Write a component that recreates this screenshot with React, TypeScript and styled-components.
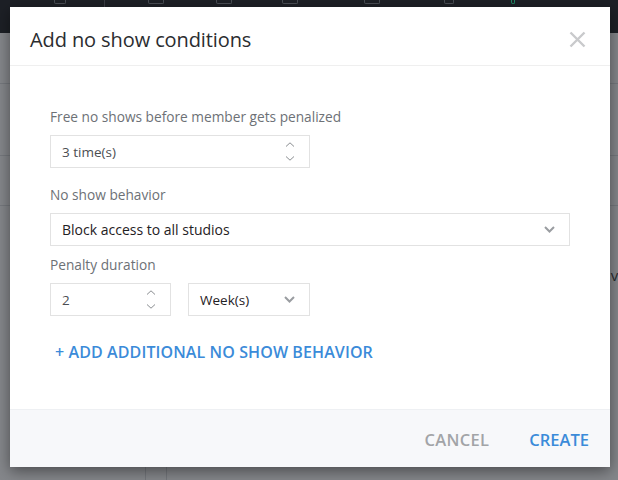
import React from "react";
import styled, { createGlobalStyle } from "styled-components";

const GlobalStyle = createGlobalStyle`
  html, body {
    margin: 0;
    padding: 0;
    background: #84868a;
  }
  body {
    font-family: "Open Sans", Lato, "Liberation Sans", sans-serif;
  }
`;

const vars = {
  blue: "#3b8bd9",
  border: "#e2e2e2",
  label: "#6d7176",
};

const Page = styled.div`
  position: relative;
  width: 618px;
  height: 480px;
  overflow: hidden;
  background: #85878b;
`;

const TopBar = styled.div`
  height: 33px;
  background: #1d2026;
  display: flex;
  align-items: flex-start;
`;

const TopIcon = styled.div<{ w: number; green?: boolean }>`
  width: ${(p) => p.w}px;
  height: 3px;
  border: 1px solid ${(p) => (p.green ? "#1f8a66" : "#4a4e55")};
  border-top: none;
  border-radius: 0 0 2px 2px;
`;

const TopGap = styled.div<{ w: number }>`
  width: ${(p) => p.w}px;
`;

const TopDivider = styled.div`
  width: 1px;
  height: 8px;
  background: #3a3d44;
`;

const BackRow = styled.div<{ h: number; last?: boolean }>`
  height: ${(p) => p.h}px;
  border-bottom: ${(p) => (p.last ? "none" : "1px solid #76797e")};
  display: flex;
  justify-content: flex-end;
  align-items: flex-end;
`;

const BackText = styled.span`
  color: #2a2c30;
  font-size: 15px;
  line-height: 18px;
  margin-right: -4px;
`;

const BackColumns = styled.div`
  display: flex;
  height: 100%;
  padding-left: 145px;
`;

const BackCol = styled.div`
  width: 20px;
  border-left: 1px solid #74777c;
  border-right: 1px solid #74777c;
`;

const Modal = styled.div`
  position: absolute;
  top: 7px;
  left: 10px;
  width: 600px;
  height: 460px;
  background: #fff;
  box-shadow: 0 4px 14px rgba(0, 0, 0, 0.45);
  display: flex;
  flex-direction: column;
`;

const Header = styled.div`
  height: 59px;
  border-bottom: 1px solid #efefef;
  display: flex;
  align-items: center;
  justify-content: space-between;
  padding: 7px 24px 0 20px;
  box-sizing: border-box;
`;

const Title = styled.h2`
  margin: 0;
  font-size: 20px;
  font-weight: 400;
  color: #2b2d30;
  letter-spacing: -0.1px;
`;

const CloseButton = styled.button`
  border: none;
  background: none;
  padding: 0;
  width: 17px;
  height: 17px;
  display: flex;
`;

const Body = styled.div`
  flex: 1;
  padding: 43px 40px 0 40px;
  display: flex;
  flex-direction: column;
`;

const Field = styled.div<{ mb: number }>`
  display: flex;
  flex-direction: column;
  gap: 10px;
  margin-bottom: ${(p) => p.mb}px;
`;

const Label = styled.div`
  font-size: 13.7px;
  color: ${vars.label};
  line-height: 16px;
`;

const Row = styled.div`
  display: flex;
  gap: 17px;
`;

const Box = styled.div<{ w: number }>`
  width: ${(p) => p.w}px;
  height: 33px;
  box-sizing: border-box;
  border: 1px solid ${vars.border};
  display: flex;
  align-items: center;
  justify-content: space-between;
  padding: 0 14px 0 11px;
`;

const BoxText = styled.span<{ dark?: boolean; size: number }>`
  font-size: ${(p) => p.size}px;
  color: ${(p) => (p.dark ? "#1f2124" : "#4b4e52")};
`;

const Stepper = styled.div`
  display: flex;
  flex-direction: column;
  gap: 9px;
`;

const AddLink = styled.a`
  margin-top: 25px;
  margin-left: 5px;
  font-size: 16px;
  font-weight: 600;
  letter-spacing: 0.1px;
  color: ${vars.blue};
  cursor: pointer;
`;

const Footer = styled.div`
  height: 58px;
  background: #f7f8fa;
  border-top: 1px solid #eef0f3;
  display: flex;
  align-items: center;
  justify-content: flex-end;
  gap: 40px;
  padding: 1px 21px 0 0;
  box-sizing: border-box;
`;

const FooterButton = styled.button<{ primary?: boolean }>`
  border: none;
  background: none;
  padding: 0;
  font-family: inherit;
  font-size: 16.5px;
  font-weight: 600;
  letter-spacing: ${(p) => (p.primary ? 0 : 0.3)}px;
  color: ${(p) => (p.primary ? vars.blue : "#a2a4a7")};
`;

const StepArrows = () => (
  <Stepper>
    <svg width="10" height="5" viewBox="0 0 10 5">
      <path d="M1 4.5 L5 0.8 L9 4.5" fill="none" stroke="#8a8d91" strokeWidth="1" />
    </svg>
    <svg width="10" height="5" viewBox="0 0 10 5">
      <path d="M1 0.5 L5 4.2 L9 0.5" fill="none" stroke="#8a8d91" strokeWidth="1" />
    </svg>
  </Stepper>
);

const Chevron = () => (
  <svg width="11" height="7" viewBox="0 0 11 7">
    <path d="M1 1 L5.5 5.5 L10 1" fill="none" stroke="#9a9da1" strokeWidth="2" />
  </svg>
);

export default function App() {
  return (
    <Page>
      <GlobalStyle />
      <TopBar>
        <TopGap w={54} />
        <TopIcon w={10} />
        <TopGap w={38} />
        <TopDivider />
        <TopGap w={43} />
        <TopIcon w={14} />
        <TopGap w={52} />
        <TopIcon w={14} />
        <TopGap w={50} />
        <TopIcon w={14} />
        <TopGap w={66} />
        <TopIcon w={14} />
        <TopGap w={64} />
        <TopIcon w={8} />
        <TopGap w={57} />
        <TopIcon w={2} green />
      </TopBar>
      <BackRow h={50} />
      <BackRow h={71} />
      <BackRow h={49} />
      <BackRow h={78} last>
        <BackText>vi</BackText>
      </BackRow>
      <BackColumns>
        <BackCol />
      </BackColumns>

      <Modal>
        <Header>
          <Title>Add no show conditions</Title>
          <CloseButton aria-label="Close">
            <svg width="17" height="17" viewBox="0 0 17 17">
              <path d="M1.5 1.5 L15.5 15.5 M15.5 1.5 L1.5 15.5" stroke="#c9cacc" strokeWidth="2.4" />
            </svg>
          </CloseButton>
        </Header>
        <Body>
          <Field mb={19}>
            <Label>Free no shows before member gets penalized</Label>
            <Row>
              <Box w={260}>
                <BoxText size={13.5}>3 time(s)</BoxText>
                <StepArrows />
              </Box>
            </Row>
          </Field>
          <Field mb={11}>
            <Label>No show behavior</Label>
            <Row>
              <Box w={520}>
                <BoxText dark size={14}>Block access to all studios</BoxText>
                <Chevron />
              </Box>
            </Row>
          </Field>
          <Field mb={0}>
            <Label>Penalty duration</Label>
            <Row>
              <Box w={121}>
                <BoxText size={13.5}>2</BoxText>
                <StepArrows />
              </Box>
              <Box w={122}>
                <BoxText dark size={13.5}>Week(s)</BoxText>
                <Chevron />
              </Box>
            </Row>
          </Field>
          <AddLink>+ ADD ADDITIONAL NO SHOW BEHAVIOR</AddLink>
        </Body>
        <Footer>
          <FooterButton>CANCEL</FooterButton>
          <FooterButton primary>CREATE</FooterButton>
        </Footer>
      </Modal>
    </Page>
  );
}
